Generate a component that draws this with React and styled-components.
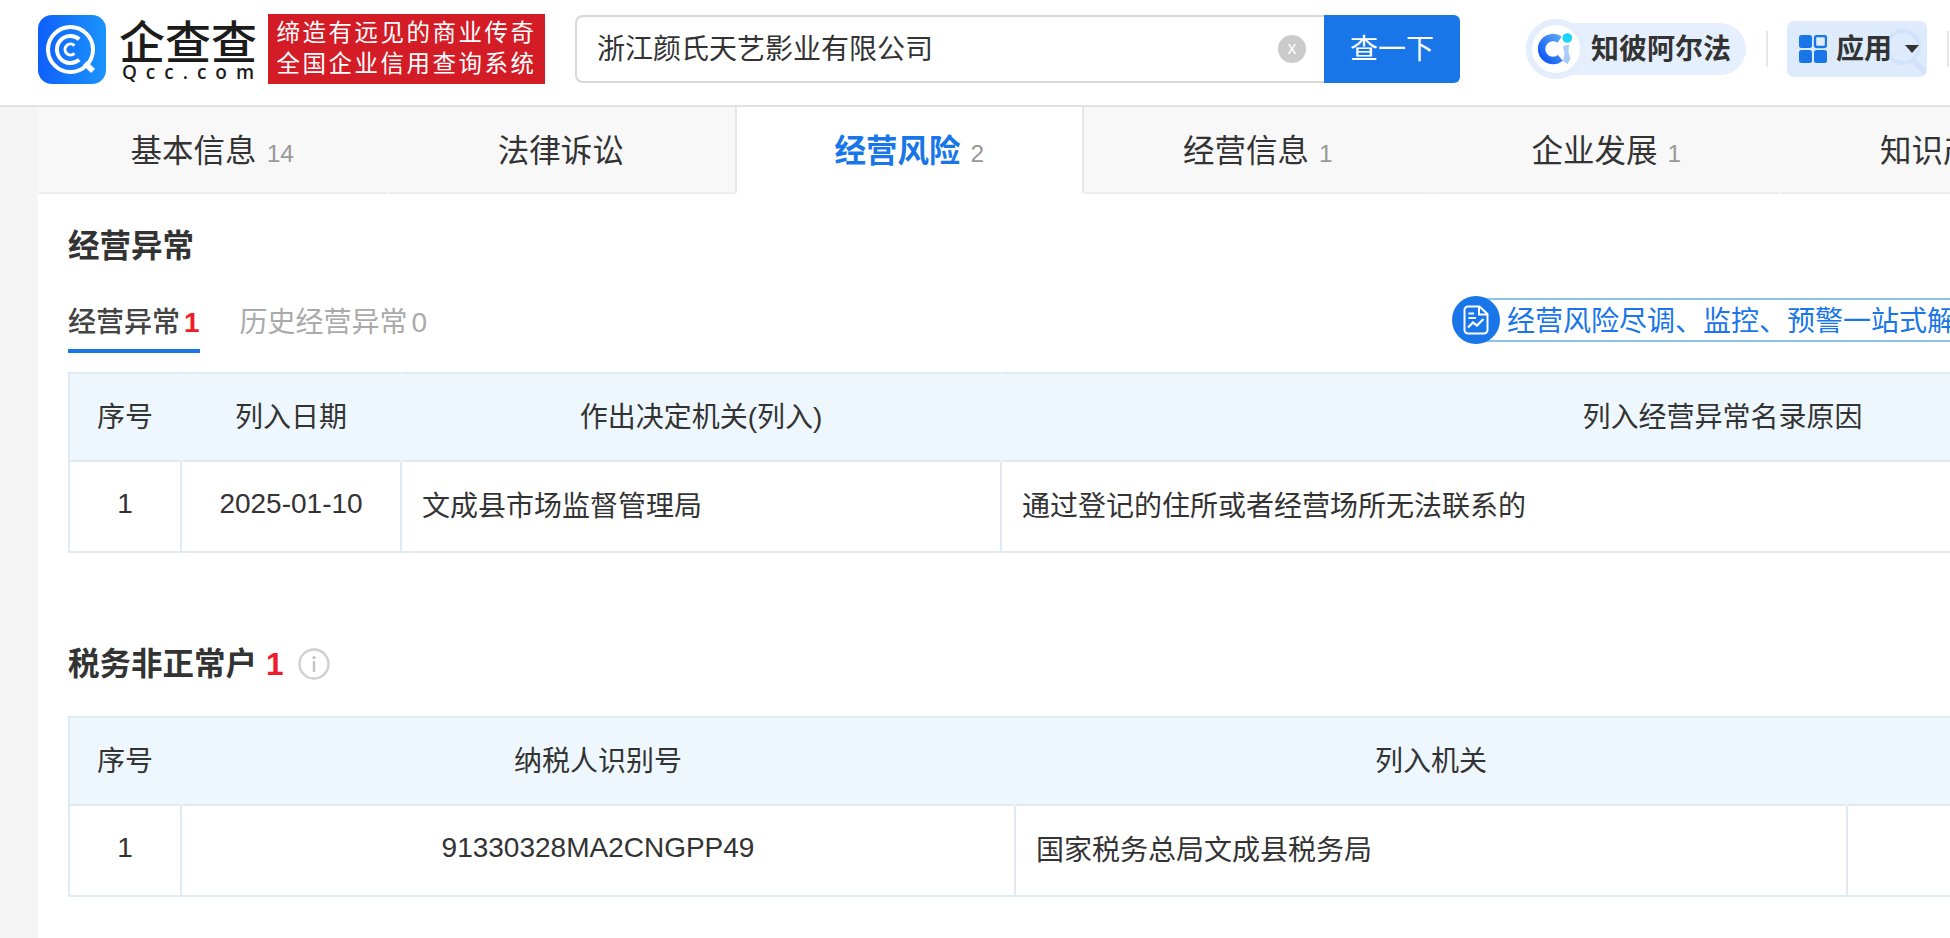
import styled, { createGlobalStyle } from "styled-components";

const BLUE = "#1976e8";
const LINE = "#deeaf4";
const HEAD_BG = "#eef7fe";

const GlobalStyle = createGlobalStyle`
  html, body {
    margin: 0;
    padding: 0;
    width: 1950px;
    height: 938px;
    overflow: hidden;
    background: #f5f5f5;
    color: #333;
    font-family: "Liberation Sans", "Noto Sans CJK SC", sans-serif;
  }
  * { box-sizing: border-box; }
`;

const mainTabs = [
  { label: "基本信息", count: 14 },
  { label: "法律诉讼" },
  { label: "经营风险", count: 2, active: true },
  { label: "经营信息", count: 1 },
  { label: "企业发展", count: 1 },
  { label: "知识产权", count: 1 },
];

function LogoMark() {
  return (
    <svg width="68" height="69" viewBox="0 0 68 69">
      <defs>
        <linearGradient id="logoBg" x1="0" y1="0" x2="1" y2="0">
          <stop offset="0" stopColor="#0f5ffb" />
          <stop offset="1" stopColor="#1a94fb" />
        </linearGradient>
      </defs>
      <rect width="68" height="69" rx="14" fill="url(#logoBg)" />
      <g fill="none" stroke="#fff">
        <circle cx="32.5" cy="34.5" r="22.5" strokeWidth="4" />
        <path d="M41.2 24.2A13.5 13.5 0 1 0 41.2 44.8" strokeWidth="4" />
        <path d="M36.4 30.6A5.5 5.5 0 1 0 36.4 38.4" strokeWidth="3" />
      </g>
      <path d="M45 50L49 46L57 54L53 58Z" fill="#fff" />
    </svg>
  );
}

function AlphaMark() {
  return (
    <svg width="36" height="36" viewBox="0 0 36 36">
      <defs>
        <linearGradient id="alphaC" x1="0" y1="1" x2="1" y2="0">
          <stop offset="0" stopColor="#0b55f5" />
          <stop offset="1" stopColor="#5aa5f3" />
        </linearGradient>
      </defs>
      <path d="M21.6 8.6A11.5 11.5 0 1 0 22.4 26.9" fill="none" stroke="url(#alphaC)" strokeWidth="7.5" />
      <path d="M25 15L31 13.5L30.5 21L32.5 28L29.5 33L25 30L26.5 23Z" fill="#a8ccf7" />
      <circle cx="29.3" cy="7" r="4.8" fill="#19d3fb" />
    </svg>
  );
}

function GridIcon() {
  return (
    <svg width="28" height="28" viewBox="0 0 28 28">
      <rect width="13" height="13" rx="2.5" fill={BLUE} />
      <rect x="16" y="1" width="11" height="11" rx="2" fill="none" stroke={BLUE} strokeWidth="2.4" />
      <rect y="15" width="13" height="13" rx="2.5" fill={BLUE} />
      <rect x="15" y="15" width="13" height="13" rx="2.5" fill={BLUE} />
    </svg>
  );
}

function DocIcon() {
  return (
    <svg width="26" height="30" viewBox="0 0 26 30" fill="none" stroke="#fff" strokeWidth="2">
      <path d="M5 1.5H16.5L24.5 9V25A3.5 3.5 0 0 1 21 28.5H5A3.5 3.5 0 0 1 1.5 25V5A3.5 3.5 0 0 1 5 1.5Z" />
      <path d="M16 2V9.5H24" />
      <path d="M5.5 8.5H11M5.5 13H13" />
      <path d="M5 22.5L10 17.5L14 20.5L20.5 14" strokeWidth="2.2" />
    </svg>
  );
}

function InfoIcon() {
  return (
    <svg width="32" height="32" viewBox="0 0 32 32">
      <circle cx="16" cy="16" r="14.5" fill="none" stroke="#cfcfcf" strokeWidth="2.4" />
      <circle cx="16" cy="9.6" r="1.7" fill="#c4c4c4" />
      <rect x="14.8" y="13" width="2.4" height="11" fill="#c4c4c4" />
    </svg>
  );
}

export default function App() {
  return (
    <Page>
      <GlobalStyle />
      <Header>
        <Logo>
          <LogoMark />
          <Wordmark>
            <WordCn>企查查</WordCn>
            <WordEn>Qcc.com</WordEn>
          </Wordmark>
        </Logo>
        <Slogan>
          <span>缔造有远见的商业传奇</span>
          <span>全国企业信用查询系统</span>
        </Slogan>
        <Search>
          <SearchText>浙江颜氏天艺影业有限公司</SearchText>
          <ClearBtn>x</ClearBtn>
          <SearchBtn>查一下</SearchBtn>
        </Search>
        <AlphaPill>
          <AlphaCircle>
            <AlphaMark />
          </AlphaCircle>
          知彼阿尔法
        </AlphaPill>
        <Divider />
        <AppsBtn>
          <Magnifier />
          <GridIcon />
          <AppsLabel>应用</AppsLabel>
          <Caret />
        </AppsBtn>
        <Divider />
      </Header>

      <Main>
        <TabBar>
          {mainTabs.map((t) => (
            <Tab key={t.label} $active={t.active}>
              {t.label}
              {t.count && <TabCount>{t.count}</TabCount>}
            </Tab>
          ))}
        </TabBar>

        <Section>
          <Title>经营异常</Title>
          <SubRow>
            <SubTab $active>
              经营异常<RedNum>1</RedNum>
            </SubTab>
            <SubTab>历史经营异常<GreyNum>0</GreyNum></SubTab>
            <Promo>
              <PromoBadge>
                <DocIcon />
              </PromoBadge>
              <PromoText>经营风险尽调、监控、预警一站式解决方案</PromoText>
            </Promo>
          </SubRow>
          <Table $width={2375}>
            <colgroup>
              <Col $w={112} />
              <Col $w={220} />
              <Col $w={600} />
              <Col $w={1443} />
            </colgroup>
            <thead>
              <tr>
                <Th>序号</Th>
                <Th>列入日期</Th>
                <Th>作出决定机关(列入)</Th>
                <Th>列入经营异常名录原因</Th>
              </tr>
            </thead>
            <tbody>
              <tr>
                <Td $center>1</Td>
                <Td $center>2025-01-10</Td>
                <Td>文成县市场监督管理局</Td>
                <Td>通过登记的住所或者经营场所无法联系的</Td>
              </tr>
            </tbody>
          </Table>

          <TaxTitle>
            <Title>税务非正常户</Title>
            <TitleNum>1</TitleNum>
            <InfoWrap>
              <InfoIcon />
            </InfoWrap>
          </TaxTitle>
          <Table $width={2378}>
            <colgroup>
              <Col $w={112} />
              <Col $w={834} />
              <Col $w={832} />
              <Col $w={600} />
            </colgroup>
            <thead>
              <tr>
                <Th>序号</Th>
                <Th>纳税人识别号</Th>
                <Th>列入机关</Th>
                <Th />
              </tr>
            </thead>
            <tbody>
              <tr>
                <Td $center>1</Td>
                <Td $center>91330328MA2CNGPP49</Td>
                <Td>国家税务总局文成县税务局</Td>
                <Td />
              </tr>
            </tbody>
          </Table>
        </Section>
      </Main>

      <Watermark>
        {Array.from({ length: 209 }).map((_, i) => (
          <Mark key={i}>88MBP9G</Mark>
        ))}
      </Watermark>
    </Page>
  );
}

const Page = styled.div`
  position: relative;
  width: 1950px;
  height: 938px;
  overflow: hidden;
`;

const Header = styled.header`
  display: flex;
  align-items: center;
  height: 107px;
  padding: 0 0 7px 38px;
  background: #fff;
  border-bottom: 2px solid #e2e2e2;
`;

const Logo = styled.div`
  display: flex;
  align-items: center;
  gap: 13px;
`;

const Wordmark = styled.div`
  display: flex;
  flex-direction: column;
  align-items: center;
  width: 138px;
  margin-top: 2px;
`;

const WordCn = styled.div`
  font-family: "Noto Sans CJK SC", sans-serif;
  font-size: 46px;
  line-height: 44px;
  font-weight: 500;
  color: #1c1c1c;
  white-space: nowrap;
`;

const WordEn = styled.div`
  margin-right: -9px;
  font-family: "Open Sans", sans-serif;
  font-size: 19px;
  line-height: 22px;
  font-weight: 600;
  letter-spacing: 9px;
  color: #1c1c1c;
`;

const Slogan = styled.div`
  display: flex;
  flex-direction: column;
  justify-content: center;
  align-items: center;
  width: 277px;
  height: 70px;
  margin-left: 11px;
  background: #d31c26;
  color: #fff;
  font-size: 23.5px;
  line-height: 31px;
  letter-spacing: 2.5px;
  white-space: nowrap;
`;

const Search = styled.div`
  position: relative;
  display: flex;
  align-items: stretch;
  width: 885px;
  height: 68px;
  margin-left: 30px;
`;

const SearchText = styled.div`
  display: flex;
  align-items: center;
  flex: 1;
  padding: 0 0 4px 20px;
  font-size: 28px;
  color: #333;
  background: #fff;
  border: 2px solid #d8d8d8;
  border-right: 0;
  border-radius: 8px 0 0 8px;
`;

const ClearBtn = styled.div`
  position: absolute;
  left: 703px;
  top: 20px;
  width: 28px;
  height: 28px;
  border-radius: 50%;
  background: #cbcbcb;
  color: #fff;
  font-size: 18px;
  line-height: 26px;
  text-align: center;
`;

const SearchBtn = styled.div`
  display: flex;
  align-items: center;
  justify-content: center;
  width: 136px;
  padding-bottom: 4px;
  background: ${BLUE};
  color: #fff;
  font-size: 28px;
  border-radius: 0 6px 6px 0;
`;

const AlphaPill = styled.div`
  position: relative;
  display: flex;
  align-items: center;
  width: 191px;
  height: 52px;
  margin-left: 95px;
  padding: 0 0 4px 36px;
  background: #e6effd;
  border-radius: 0 26px 26px 0;
  font-size: 28px;
  font-weight: 600;
  color: #333;
  white-space: nowrap;
`;

const AlphaCircle = styled.div`
  position: absolute;
  left: -29px;
  top: -4px;
  width: 60px;
  height: 60px;
  display: flex;
  align-items: center;
  justify-content: center;
  background: #fff;
  border: 6px solid #e3edfc;
  border-radius: 50%;
`;

const Divider = styled.div`
  width: 2px;
  height: 36px;
  margin-left: 20px;
  background: #e8e8e8;
`;

const AppsBtn = styled.div`
  position: relative;
  display: flex;
  align-items: center;
  width: 140px;
  height: 56px;
  margin-left: 19px;
  padding-left: 12px;
  background: #deebfc;
  border-radius: 7px;
`;

const AppsLabel = styled.span`
  position: relative;
  margin-left: 9px;
  padding-bottom: 4px;
  font-size: 28px;
  font-weight: 600;
  color: #333;
`;

const Caret = styled.span`
  position: relative;
  width: 0;
  height: 0;
  margin-left: 13px;
  border-left: 7.5px solid transparent;
  border-right: 7.5px solid transparent;
  border-top: 8px solid #333;
`;

const Magnifier = styled.span`
  position: absolute;
  left: 98px;
  top: 8px;
  width: 36px;
  height: 36px;
  border: 4px solid #d2e2fa;
  border-radius: 50%;
  &::after {
    content: "";
    position: absolute;
    left: 25px;
    top: 25px;
    width: 16px;
    height: 6px;
    border-radius: 3px;
    background: #d2e2fa;
    transform: rotate(45deg);
    transform-origin: left center;
  }
`;

const Main = styled.main`
  margin-left: 38px;
  height: 831px;
  background: #fff;
`;

const TabBar = styled.nav`
  display: flex;
  height: 87px;
`;

const Tab = styled.div`
  flex: 0 0 348.5px;
  display: flex;
  align-items: baseline;
  justify-content: center;
  padding-top: 24px;
  font-size: 31.5px;
  line-height: 40px;
  color: ${(p) => (p.$active ? BLUE : "#333")};
  font-weight: ${(p) => (p.$active ? 600 : 400)};
  background: ${(p) => (p.$active ? "#fff" : "#f8f8f8")};
  border-bottom: 2px solid ${(p) => (p.$active ? "#fff" : "#ececec")};
  border-left: 2px solid ${(p) => (p.$active ? "#e6e6e6" : "transparent")};
  border-right: 2px solid ${(p) => (p.$active ? "#e6e6e6" : "transparent")};
  white-space: nowrap;
`;

const TabCount = styled.span`
  margin-left: 10px;
  font-size: 24.5px;
  font-weight: 400;
  color: #999;
`;

const Section = styled.section`
  padding: 30px 0 0 30px;
`;

const Title = styled.h2`
  margin: 0;
  font-size: 31.5px;
  line-height: 44px;
  font-weight: 600;
  color: #333;
`;

const SubRow = styled.div`
  display: flex;
  align-items: flex-start;
  gap: 40px;
  height: 57px;
  margin-top: 28px;
`;

const SubTab = styled.div`
  display: flex;
  align-items: baseline;
  height: 57px;
  font-size: 28px;
  line-height: 53px;
  color: ${(p) => (p.$active ? "#444" : "#aaa")};
  font-weight: ${(p) => (p.$active ? 500 : 400)};
  border-bottom: 4px solid ${(p) => (p.$active ? BLUE : "transparent")};
  white-space: nowrap;
`;

const RedNum = styled.span`
  margin-left: 4px;
  color: #ee1d2d;
  font-weight: 700;
`;

const GreyNum = styled.span`
  margin-left: 4px;
`;

const Promo = styled.div`
  position: relative;
  display: flex;
  align-items: center;
  flex: none;
  width: 495px;
  height: 44px;
  margin: 2px -30px 0 auto;
  padding: 0 0 3px 20px;
  border: 2px solid #8cc2f0;
  border-right: 0;
  white-space: nowrap;
`;

const PromoBadge = styled.div`
  position: absolute;
  left: -35px;
  top: -4px;
  width: 48px;
  height: 48px;
  display: flex;
  align-items: center;
  justify-content: center;
  border-radius: 50%;
  background: ${BLUE};
`;

const PromoText = styled.span`
  font-size: 28px;
  color: ${BLUE};
`;

const Table = styled.table`
  table-layout: fixed;
  width: ${(p) => p.$width}px;
  margin-top: 19px;
  border-collapse: separate;
  border-spacing: 0;
  font-size: 28px;
  color: #333;
`;

const Col = styled.col`
  width: ${(p) => p.$w}px;
`;

const Th = styled.th`
  height: 90px;
  padding: 0 0 5px;
  font-weight: 400;
  text-align: center;
  background: ${HEAD_BG};
  border-top: 2px solid ${LINE};
  border-bottom: 2px solid ${LINE};
  border-left: 2px solid ${HEAD_BG};
  &:first-child {
    border-left-color: ${LINE};
  }
`;

const Td = styled.td`
  height: 91px;
  padding: 0 ${(p) => (p.$center ? 0 : 20)}px 5px;
  text-align: ${(p) => (p.$center ? "center" : "left")};
  border-bottom: 2px solid ${LINE};
  border-left: 2px solid ${LINE};
  white-space: nowrap;
`;

const TaxTitle = styled.div`
  display: flex;
  align-items: center;
  height: 44px;
  margin-top: 89px;
  margin-bottom: 30px;
`;

const TitleNum = styled.span`
  margin-left: 9px;
  font-size: 31.5px;
  font-weight: 700;
  color: #ee1d2d;
`;

const InfoWrap = styled.span`
  display: flex;
  margin-left: 14px;
`;

const Watermark = styled.div`
  position: absolute;
  left: -525px;
  top: -1031px;
  width: 3000px;
  height: 3000px;
  display: grid;
  grid-template-columns: repeat(auto-fill, 283px);
  grid-auto-rows: 160px;
  transform: rotate(-45deg);
  pointer-events: none;
`;

const Mark = styled.span`
  width: 266px;
  height: 70px;
  text-align: right;
  font-size: 34px;
  line-height: 70px;
  font-weight: 700;
  letter-spacing: 7px;
  color: rgba(0, 0, 0, 0.02);
  white-space: nowrap;
`;
